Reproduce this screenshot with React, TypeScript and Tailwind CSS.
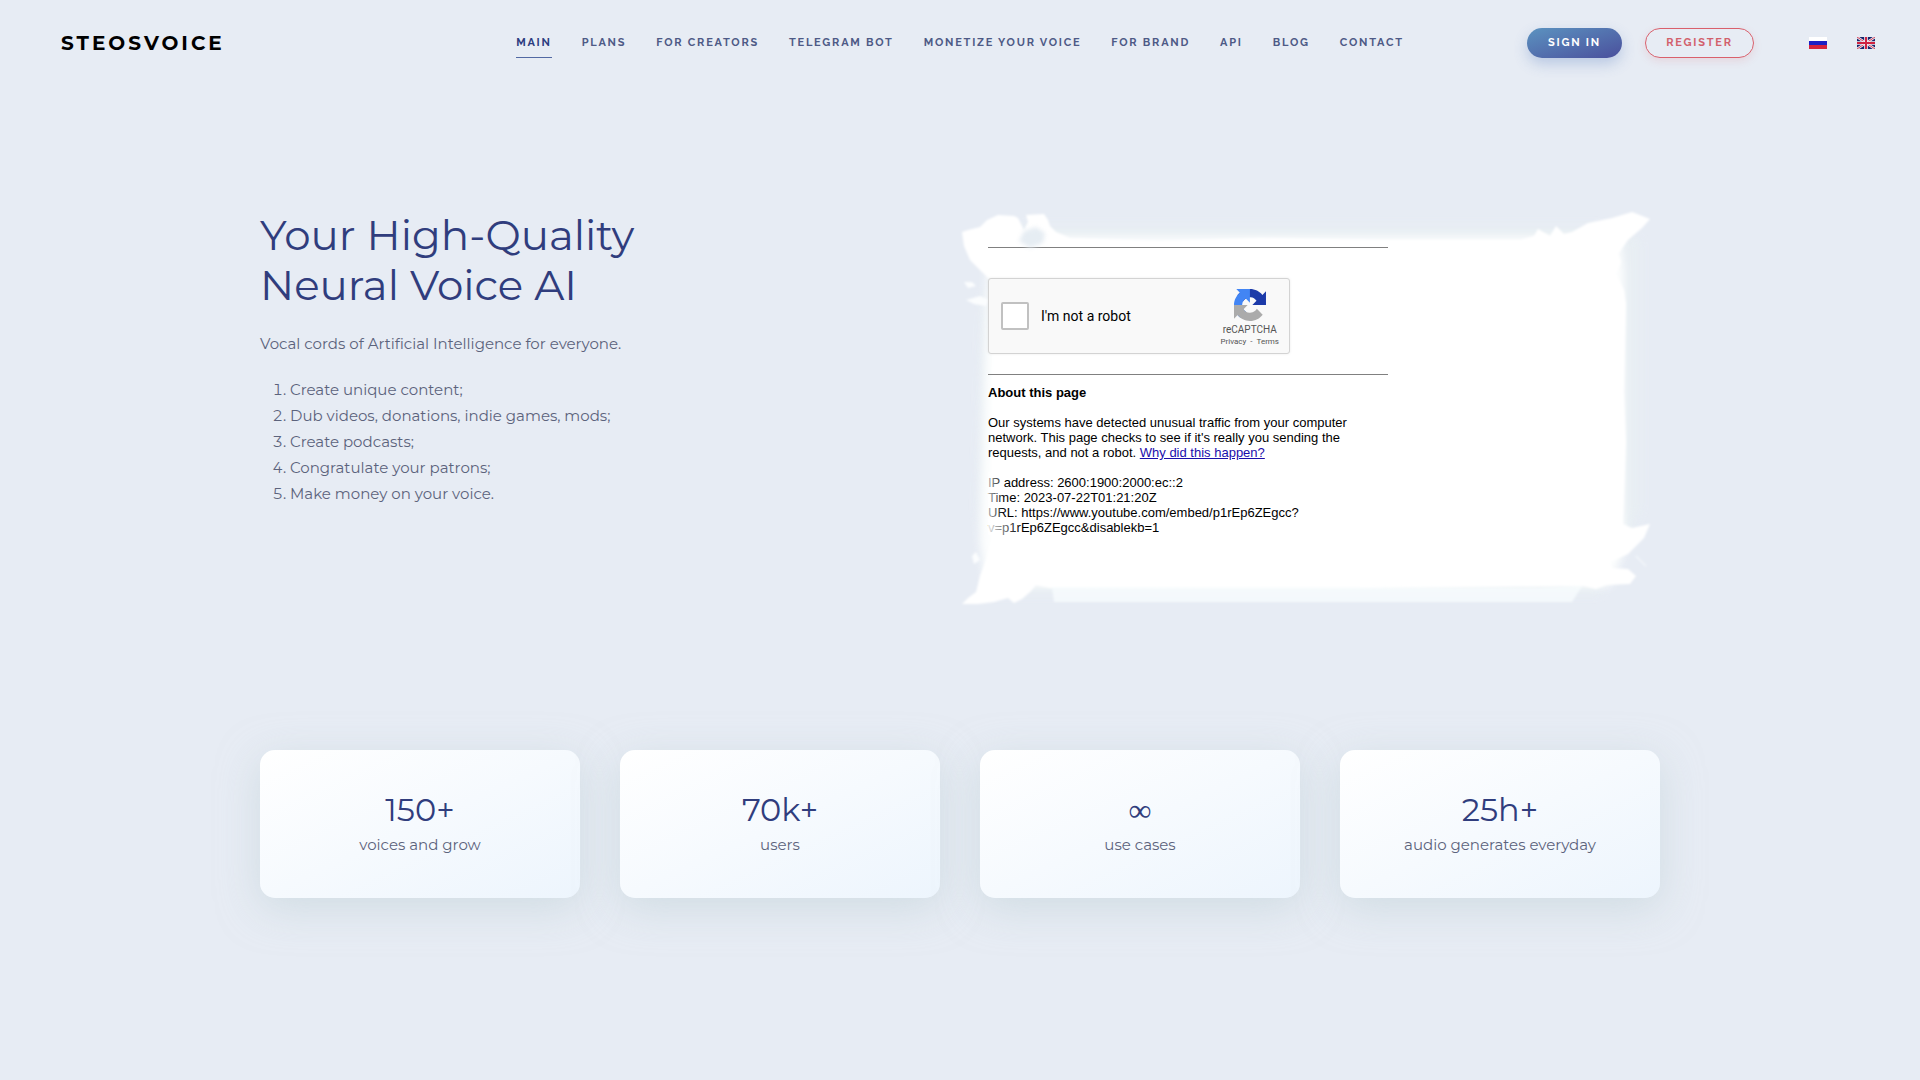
const navItems = [
  { label: "Main", active: true },
  { label: "Plans" },
  { label: "For creators" },
  { label: "Telegram bot" },
  { label: "Monetize your voice" },
  { label: "For brand" },
  { label: "API" },
  { label: "Blog" },
  { label: "Contact" },
];

const features = [
  "Create unique content;",
  "Dub videos, donations, indie games, mods;",
  "Create podcasts;",
  "Congratulate your patrons;",
  "Make money on your voice.",
];

const stats = [
  { value: "150+", label: "voices and grow" },
  { value: "70k+", label: "users" },
  { value: "∞", label: "use cases", symbol: true },
  { value: "25h+", label: "audio generates everyday" },
];

function FlagRu() {
  return (
    <svg viewBox="0 0 18 12" className="w-[18px] h-3">
      <rect width="18" height="12" fill="#fff" />
      <rect y="4" width="18" height="4" fill="#1c1fc4" />
      <rect y="8" width="18" height="4" fill="#d5243c" />
    </svg>
  );
}

function FlagGb() {
  return (
    <svg viewBox="0 0 18 12" className="w-[18px] h-3">
      <rect width="18" height="12" fill="#17246b" />
      <path d="M0 0L18 12M18 0L0 12" stroke="#f3f0f5" strokeWidth="2.4" />
      <path d="M0 0L18 12M18 0L0 12" stroke="#cf2a45" strokeWidth="0.9" />
      <path d="M9 0V12M0 6H18" stroke="#f3f0f5" strokeWidth="3.6" />
      <path d="M9 0V12M0 6H18" stroke="#cf2140" strokeWidth="2" />
    </svg>
  );
}

function Header() {
  return (
    <header className="grid grid-cols-[1fr_auto_1fr] items-center h-[86px] px-[45px] font-['Raleway','Lato',sans-serif]">
      <a
        href="#"
        className="justify-self-start ml-4 font-['Montserrat','Inter',sans-serif] text-xl font-bold text-black tracking-[3px]"
      >
        STEOSVOICE
      </a>
      <nav className="flex gap-[30px]">
        {navItems.map((item) => (
          <a
            key={item.label}
            href="#"
            className={`text-[11px] leading-4 pt-[7px] pb-1.5 font-bold uppercase tracking-[0.16em] border-b ${
              item.active ? "text-[#2d3c80] border-[#5269a3]" : "text-[#4e5a86] border-transparent"
            }`}
          >
            {item.label}
          </a>
        ))}
      </nav>
      <div className="justify-self-end flex items-center text-[11px] font-bold tracking-[0.16em]">
        <button className="w-[95px] h-[30px] rounded-full bg-linear-to-br from-[#5b93c0] to-[#4a4f9c] text-white shadow-[0_6px_14px_rgba(80,120,190,0.3)]">
          SIGN IN
        </button>
        <button className="ml-[23px] w-[109px] h-[30px] rounded-full border border-[#d9606c] text-[#d2606c] shadow-[0_3px_8px_rgba(220,90,100,0.15)]">
          REGISTER
        </button>
        <a href="#" aria-label="Русский" className="ml-[55px]">
          <FlagRu />
        </a>
        <a href="#" aria-label="English" className="ml-[30px]">
          <FlagGb />
        </a>
      </div>
    </header>
  );
}

function PaintBackdrop() {
  return (
    <svg viewBox="0 0 700 394" preserveAspectRatio="none" className="absolute inset-0 w-full h-full overflow-visible">
      <defs>
        <filter id="soft" x="-10%" y="-10%" width="120%" height="120%">
          <feGaussianBlur stdDeviation="4" />
        </filter>
        <filter id="edge" x="-5%" y="-5%" width="110%" height="110%">
          <feGaussianBlur stdDeviation="0.9" />
        </filter>
      </defs>
      <path d="M22 90L60 16H640L680 30V300L640 384H30L18 300Z" fill="#e9f0f3" opacity="0.7" filter="url(#soft)" />
      <path d="M28 40L40 27H660L664 60V340L650 376H26L20 330Z" fill="#fdfefe" filter="url(#soft)" />
      <g filter="url(#edge)">
        <path
          fill="#fff"
          d="M2 22L8 20L20 17L27 10L38 5L54 6L58 8L64 20L68 12L66 5L84 4L88 10L90 16L96 22L110 28L140 29L200 31L300 28L420 30L560 30L574 26L578 19L590 26L596 16L604 24L612 22L628 13L652 8L672 2L690 9L682 18L668 30L658 44L661 52L656 64L664 80L666 94L664 182L666 232L663 314L672 318L690 314L684 328L668 344L650 352L652 358L668 359L676 366L670 374L646 375L636 379L624 376L600 376L400 378L90 378L76 375L70 382L62 389L54 393L48 388L34 392L18 394L2 394L8 388L16 382L20 366L26 350L31 330L32 200L33 72L22 62L10 50L4 36Z"
        />
        <path fill="#f8fcfe" d="M92 377L580 378L622 376L612 392L94 392Z" opacity="0.8" />
        <path fill="#fbfdfe" d="M4 72L12 72L16 76L8 78ZM6 90L20 86L30 90L26 96L14 94Z" />
        <path fill="#fbfdfe" d="M12 346L16 342L20 350L14 354Z" />
        <path d="M676 346L686 356" stroke="#f3f7fb" strokeWidth="1.5" />
      </g>
    </svg>
  );
}

function RecaptchaLogo() {
  return (
    <svg viewBox="0 0 64 64" className="w-8 h-8">
      <path
        fill="#1c3aa9"
        d="M64 31.955l-.033-1.370V4.687l-7.160 7.160C50.948 4.674 42.033.093 32.050.093c-10.400 0-19.622 4.960-25.458 12.640l11.736 11.860a15.550 15.550 0 0 1 4.754-5.334c2.050-1.600 4.952-2.906 8.968-2.906.485 0 .860.057 1.135.163 4.976.393 9.288 3.140 11.828 7.124l-8.307 8.307L64 31.953"
      />
      <path
        fill="#4285f4"
        d="M31.862.094l-1.370.033H4.594l7.160 7.160C4.580 13.147 0 22.060 0 32.046c0 10.400 4.960 19.622 12.640 25.458L24.500 45.768a15.550 15.550 0 0 1-5.334-4.754c-1.600-2.050-2.906-4.952-2.906-8.968 0-.485.057-.860.163-1.135.393-4.976 3.140-9.288 7.124-11.828l8.307 8.307L31.860.095"
      />
      <path
        fill="#ababab"
        d="M.001 32.045l.033 1.370v25.898l7.160-7.160c5.860 7.173 14.774 11.754 24.760 11.754 10.400 0 19.622-4.960 25.458-12.640l-11.736-11.860a15.550 15.550 0 0 1-4.754 5.334c-2.050 1.600-4.952 2.906-8.968 2.906-.485 0-.860-.057-1.135-.163-4.976-.393-9.288-3.140-11.828-7.124l8.307-8.307c-10.522.040-22.400.066-27.295-.005"
      />
    </svg>
  );
}

function VideoFrame() {
  return (
    <div className="relative w-full min-h-[394px] pt-[37px] pl-7 font-['Liberation_Sans',Arial,sans-serif] text-[13px] leading-[15px] text-black">
      <PaintBackdrop />
      <div className="relative w-[400px]">
        <hr className="border-[#808080]" />
        <div className="mt-[30px] w-[302px] h-[76px] flex items-center pl-3 pr-2.5 bg-[#f9f9f9] border border-[#d3d3d3] rounded-[3px] shadow-[0_0_3px_rgba(0,0,0,0.08)] font-['Roboto',sans-serif]">
          <input
            id="robot"
            type="checkbox"
            className="appearance-none w-7 h-7 bg-white border-2 border-[#c1c1c1] rounded-[2px]"
          />
          <label htmlFor="robot" className="ml-3 text-sm">
            I'm not a robot
          </label>
          <div className="ml-auto pt-1 flex flex-col items-center text-[#555]">
            <RecaptchaLogo />
            <span className="mt-[3px] text-[10px] leading-3">reCAPTCHA</span>
            <span className="text-[8px] leading-3">
              <a href="#">Privacy</a>
              <span className="px-0.5"> - </span>
              <a href="#">Terms</a>
            </span>
          </div>
        </div>
        <hr className="mt-5 border-[#808080]" />
        <p className="mt-[10px] font-bold">About this page</p>
        <p className="mt-[15px]">
          Our systems have detected unusual traffic from your computer network. This page checks to see if it's really
          you sending the requests, and not a robot.{" "}
          <a href="#" className="text-[#1a0dab] underline">
            Why did this happen?
          </a>
        </p>
        <p className="mt-[15px]">
          IP address: 2600:1900:2000:ec::2
          <br />
          Time: 2023-07-22T01:21:20Z
          <br />
          URL: https://www.youtube.com/embed/p1rEp6ZEgcc?
          <br />
          v=p1rEp6ZEgcc&disablekb=1
        </p>
      </div>
      {/* paint strokes that run over the embedded page */}
      <div className="absolute left-7 top-[262px] w-4 h-[45px] bg-linear-to-r from-white/70 to-transparent pointer-events-none" />
      <div className="absolute left-7 top-[307px] w-8 h-[18px] bg-linear-to-r from-white/90 to-transparent pointer-events-none" />
      <svg viewBox="0 0 32 30" className="absolute left-[56px] top-[13px] w-8 h-[30px] blur-[2px] pointer-events-none">
        <path d="M8 8L20 4L29 10L27 20L14 25L3 18Z" fill="#e6edf3" />
      </svg>
    </div>
  );
}

export default function App() {
  return (
    <div className="min-h-screen bg-[#e7ecf4] font-['Montserrat','Inter',sans-serif] text-[#5c637c]">
      <Header />
      <main className="max-w-[1400px] mx-auto pt-[124px]">
        <section className="grid grid-cols-2">
          <div>
            <h1 className="text-[42px] leading-[50px] text-[#303d7d]">
              Your High-Quality
              <br />
              Neural Voice AI
            </h1>
            <p className="mt-[21px] text-[15px] leading-[26px]">Vocal cords of Artificial Intelligence for everyone.</p>
            <ol className="mt-5 pl-[30px] list-decimal text-[15px] leading-[26px]">
              {features.map((feature) => (
                <li key={feature}>{feature}</li>
              ))}
            </ol>
          </div>
          <VideoFrame />
        </section>

        <section className="mt-[146px] grid grid-cols-4 gap-10">
          {stats.map((stat) => (
            <div
              key={stat.label}
              className="h-[148px] pt-10 text-center rounded-[15px] bg-linear-to-br from-white to-[#edf5fd] shadow-[0_10px_40px_rgba(190,208,214,0.55)]"
            >
              <div
                className={`text-[32px] leading-10 text-[#303d7d] ${
                  stat.symbol ? "font-['Liberation_Serif',serif]" : ""
                }`}
              >
                {stat.value}
              </div>
              <div className="mt-1 text-[15px] leading-[22px]">{stat.label}</div>
            </div>
          ))}
        </section>
      </main>
    </div>
  );
}
